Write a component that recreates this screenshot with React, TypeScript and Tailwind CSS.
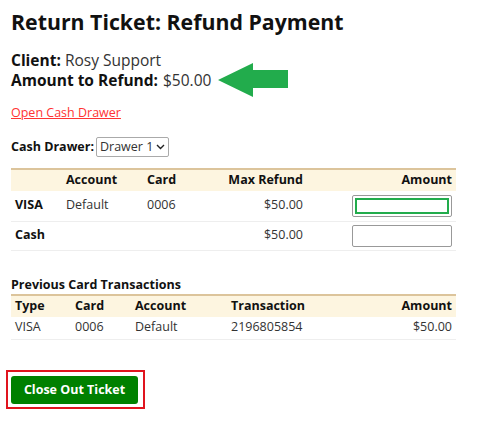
import React from 'react';

const ArrowLeftIcon = () => (
  <svg width="70" height="34" viewBox="0 0 70 34" className="ml-[7px]">
    <polygon points="0,17 35,0 35,7 70,7 70,25 35,25 35,34" fill="#22ac4c" />
  </svg>
);

export default function App() {
  return (
    <div className="w-[502px] h-[434px] bg-white px-[11px] pt-[7px] text-[#222]" style={{ fontFamily: '"Open Sans", sans-serif' }}>
      <h1 className="text-[21.3px] font-bold text-[#111] leading-[30px]">Return Ticket: Refund Payment</h1>

      <div className="mt-[13px] text-[15.5px] leading-[20px]">
        <div>
          <span className="font-bold text-[#111]">Client:</span> <span className="text-[#333]">Rosy Support</span>
        </div>
        <div className="flex items-center h-[20px]">
          <span className="font-bold text-[#111]">Amount to Refund:</span>
          <span className="text-[#333] ml-[5px]">$50.00</span>
          <ArrowLeftIcon />
        </div>
      </div>

      <a href="#" className="block mt-[14px] text-[12.5px] leading-[18px] text-[#f33] underline w-fit">Open Cash Drawer</a>

      <div className="mt-[15px] flex items-center text-[12.5px]">
        <span className="font-bold text-[#111]">Cash Drawer:</span>
        <div className="ml-[2px] h-[20px] pl-[3px] pr-[3px] border border-[#aaa] rounded-[2px] flex items-center gap-[3px] text-[#333] text-[12.5px]">
          Drawer 1
          <svg width="9" height="6" viewBox="0 0 9 6"><path d="M1 1 L4.5 4.5 L8 1" stroke="#222" strokeWidth="1.4" fill="none" /></svg>
        </div>
      </div>

      <table className="mt-[11px] w-[445px] text-[12.5px] border-t-2 border-[#dcc49b] border-collapse">
        <thead>
          <tr className="bg-[#fdf5e0] h-[22px] font-bold text-[#111] whitespace-nowrap">
            <th className="text-left pl-[4px] w-[55px]"></th>
            <th className="text-left w-[81px]">Account</th>
            <th className="text-left w-[80px]">Card</th>
            <th className="text-right w-[76px]">Max Refund</th>
            <th className="text-right pr-[4px]">Amount</th>
          </tr>
        </thead>
        <tbody>
          <tr className="h-[30px] border-b border-[#eee]">
            <td className="pl-[4px] font-bold text-[#111]">VISA</td>
            <td className="text-[#333]">Default</td>
            <td className="text-[#333]">0006</td>
            <td className="text-right text-[#333]">$50.00</td>
            <td className="pr-[4px]">
              <div className="ml-auto w-[100px] h-[22px] border border-[#999] rounded-[2px] p-[2px]">
                <div className="w-full h-full border-2 border-[#22ac4c]" />
              </div>
            </td>
          </tr>
          <tr className="h-[29px] border-b border-[#eee]">
            <td className="pl-[4px] font-bold text-[#111]">Cash</td>
            <td></td>
            <td></td>
            <td className="text-right text-[#333]">$50.00</td>
            <td className="pr-[4px]">
              <input className="block ml-auto w-[100px] h-[22px] border border-[#999] rounded-[2px]" />
            </td>
          </tr>
        </tbody>
      </table>

      <div className="mt-[26px] text-[12.5px] font-bold text-[#111] leading-[16px]">Previous Card Transactions</div>
      <table className="mt-[1px] w-[445px] text-[12.5px] border-t-2 border-[#dcc49b] border-collapse">
        <thead>
          <tr className="bg-[#fdf5e0] h-[22px] font-bold text-[#111] whitespace-nowrap">
            <th className="text-left pl-[4px] w-[64px]">Type</th>
            <th className="text-left w-[60px]">Card</th>
            <th className="text-left w-[96px]">Account</th>
            <th className="text-left">Transaction</th>
            <th className="text-right pr-[4px]">Amount</th>
          </tr>
        </thead>
        <tbody>
          <tr className="h-[23px] border-b border-[#eee] text-[#333]">
            <td className="pl-[4px]">VISA</td>
            <td>0006</td>
            <td>Default</td>
            <td>2196805854</td>
            <td className="text-right pr-[4px]">$50.00</td>
          </tr>
        </tbody>
      </table>

      <div className="mt-[30px] ml-[-5px] w-fit border-2 border-[#e0141e] pt-[4px] pb-[3px] pl-[3px] pr-[5px]">
        <button className="block h-[28px] w-[127px] bg-[#008000] text-white font-bold text-[12.5px] rounded-[3px]">Close Out Ticket</button>
      </div>
    </div>
  );
}
